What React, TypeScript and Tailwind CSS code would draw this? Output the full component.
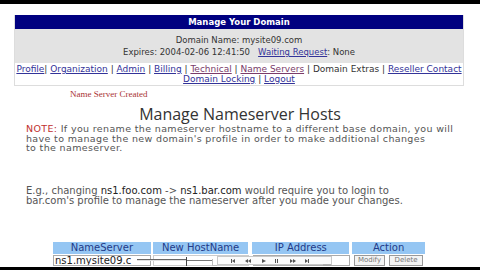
import React from 'react';

const sans = { fontFamily: '"DejaVu Sans", Verdana, sans-serif' };
const serif = { fontFamily: '"Liberation Serif", "Times New Roman", serif' };

type NavLink = { name: string; visited?: boolean; plain?: boolean };

const navRow1: NavLink[] = [
  { name: 'Profile' },
  { name: 'Organization' },
  { name: 'Admin' },
  { name: 'Billing' },
  { name: 'Technical', visited: true },
  { name: 'Name Servers', visited: true },
  { name: 'Domain Extras', plain: true },
  { name: 'Reseller Contact' },
];

const navRow2: NavLink[] = [{ name: 'Domain Locking' }, { name: 'Logout' }];

function NavRow({ items }: { items: NavLink[] }) {
  return (
    <div className="whitespace-nowrap">
      {items.map((item, i) => (
        <React.Fragment key={item.name}>
          {i > 0 && <span className="text-[#333]">{i === 1 && items[0].name === 'Profile' ? '| ' : ' | '}</span>}
          {item.plain ? (
            <span className="text-[#333]">{item.name}</span>
          ) : (
            <a className={`underline ${item.visited ? 'text-[#7a3b6a]' : 'text-[#333399]'}`}>{item.name}</a>
          )}
        </React.Fragment>
      ))}
    </div>
  );
}

function PlayerOverlay() {
  // video player scrubber sitting over the table row
  return (
    <div className="absolute left-[137px] top-[256px] w-[196px] h-[10px] flex items-center">
      <div className="relative w-[49px] h-full">
        <div className="absolute left-0 right-0 top-[3px] h-px bg-[#666]" />
        <div className="absolute left-0 right-0 top-[4px] h-px bg-[#e0e0e0]" />
      </div>
      <div className="w-px h-[9px] bg-[#444]" />
      <div className="relative w-[25px] h-full">
        <div className="absolute left-0 right-0 top-[4px] h-px bg-[#777]" />
      </div>
      <div className="w-[5px] h-[7px] mt-[3px] border-l border-b border-[#bbb]" />
      <svg width="116" height="10" viewBox="0 0 116 10" className="text-[#555]">
        <rect x="0.5" y="0.5" width="114" height="8" fill="#fbfbfb" stroke="#c8c8c8" />
        <g fill="currentColor">
          <rect x="14" y="3" width="1" height="4" />
          <path d="M15 5 L18 3 L18 7 Z" />
          <path d="M28 5 L31 3 L31 7 Z" />
          <path d="M31 5 L34 3 L34 7 Z" />
          <path d="M45 3 L49 5 L45 7 Z" />
          <rect x="58" y="3" width="1" height="4" />
          <rect x="60" y="3" width="1" height="4" />
          <path d="M73 3 L76 5 L73 7 Z" />
          <path d="M76 3 L79 5 L76 7 Z" />
          <path d="M88 3 L91 5 L88 7 Z" />
          <rect x="91" y="3" width="1" height="4" />
        </g>
        <path d="M106 9 L114 9" stroke="#999" />
      </svg>
    </div>
  );
}

export default function App() {
  return (
    <div className="relative w-[480px] h-[270px] bg-white overflow-hidden" style={sans}>
      <div className="h-[4px] bg-black" />

      <div className="w-[450px] ml-[14px] mt-[11px] border-b border-x border-[#ddd]">
        <div className="h-[14px] bg-[#000080] text-white text-[8.5px] font-bold leading-[14px] text-center">
          Manage Your Domain
        </div>
        <div className="h-[34px] bg-[#e3e3e3] flex flex-col justify-center text-center text-[8.5px] leading-[12px] text-[#333]">
          <div>Domain Name: mysite09.com</div>
          <div>
            Expires: 2004-02-06 12:41:50&nbsp;&nbsp;&nbsp;
            <a className="underline text-[#333399]">Waiting Request</a>: None
          </div>
        </div>
        <div className="pt-[2px] pb-[1px] text-center text-[9px] leading-[9.5px]">
          <NavRow items={navRow1} />
          <NavRow items={navRow2} />
        </div>
      </div>

      <div className="ml-[70px] mt-[3px] text-[9px] leading-[10px] text-[#a33]" style={serif}>
        Name Server Created
      </div>

      <div
        className="mt-[7px] text-center text-[16px] leading-[16px] text-[#333]"
        style={{ fontFamily: '"Open Sans", sans-serif', fontWeight: 400 }}
      >
        Manage Nameserver Hosts
      </div>

      <div className="ml-[26px] mt-[2px] w-[450px] text-[9.5px] leading-[9.5px] tracking-[0.35px] text-[#555]">
        <div>
          <span className="text-[#c03030]">NOTE:</span> If you rename the nameserver hostname to a different base domain, you will
        </div>
        <div>have to manage the new domain's profile in order to make additional changes</div>
        <div>to the nameserver.</div>
      </div>

      <div className="ml-[26px] mt-[33px] w-[450px] text-[10px] leading-[10px] text-[#555]">
        <div>
          E.g., changing <span className="text-[#222]">ns1.foo.com</span> -&gt; <span className="text-[#222]">ns1.bar.com</span> would require you to login to
        </div>
        <div>bar.com's profile to manage the nameserver after you made your changes.</div>
      </div>

      <div className="ml-[53px] mt-[36px] w-[372px]">
        <div className="flex gap-[2px] h-[12px] text-[10px] leading-[12px] text-[#223a88]">
          <div className="w-[98px] bg-[#95c6f3] text-center">NameServer</div>
          <div className="w-[96px] bg-[#95c6f3] text-center">New HostName</div>
          <div className="w-[97px] bg-[#95c6f3] text-center ml-[2px]">IP Address</div>
          <div className="w-[73px] bg-[#95c6f3] text-center ml-[1px]">Action</div>
        </div>
        <div className="flex gap-[2px] mt-[1px] h-[11px] items-center">
          <div className="w-[98px] h-[11px] border border-[#aaa] bg-white text-[10px] leading-[9px] text-[#222] pl-[1px] overflow-hidden">
            ns1.mysite09.c
          </div>
          <div className="w-[96px] h-[11px] border border-[#ccc] bg-white" />
          <div className="w-[97px] h-[11px] border border-[#aaa] bg-white ml-[2px]" />
          <div className="flex gap-[4px] ml-[2px]">
            <button className="w-[31px] h-[11px] border border-[#999] bg-[#f4f4f4] text-[7px] leading-[9px] text-[#777]">
              Modify
            </button>
            <button className="w-[34px] h-[11px] border border-[#999] bg-[#f4f4f4] text-[7px] leading-[9px] text-[#777]">
              Delete
            </button>
          </div>
        </div>
      </div>

      <PlayerOverlay />

      <div className="absolute left-0 right-0 bottom-0 h-[3px] bg-black" />
    </div>
  );
}
